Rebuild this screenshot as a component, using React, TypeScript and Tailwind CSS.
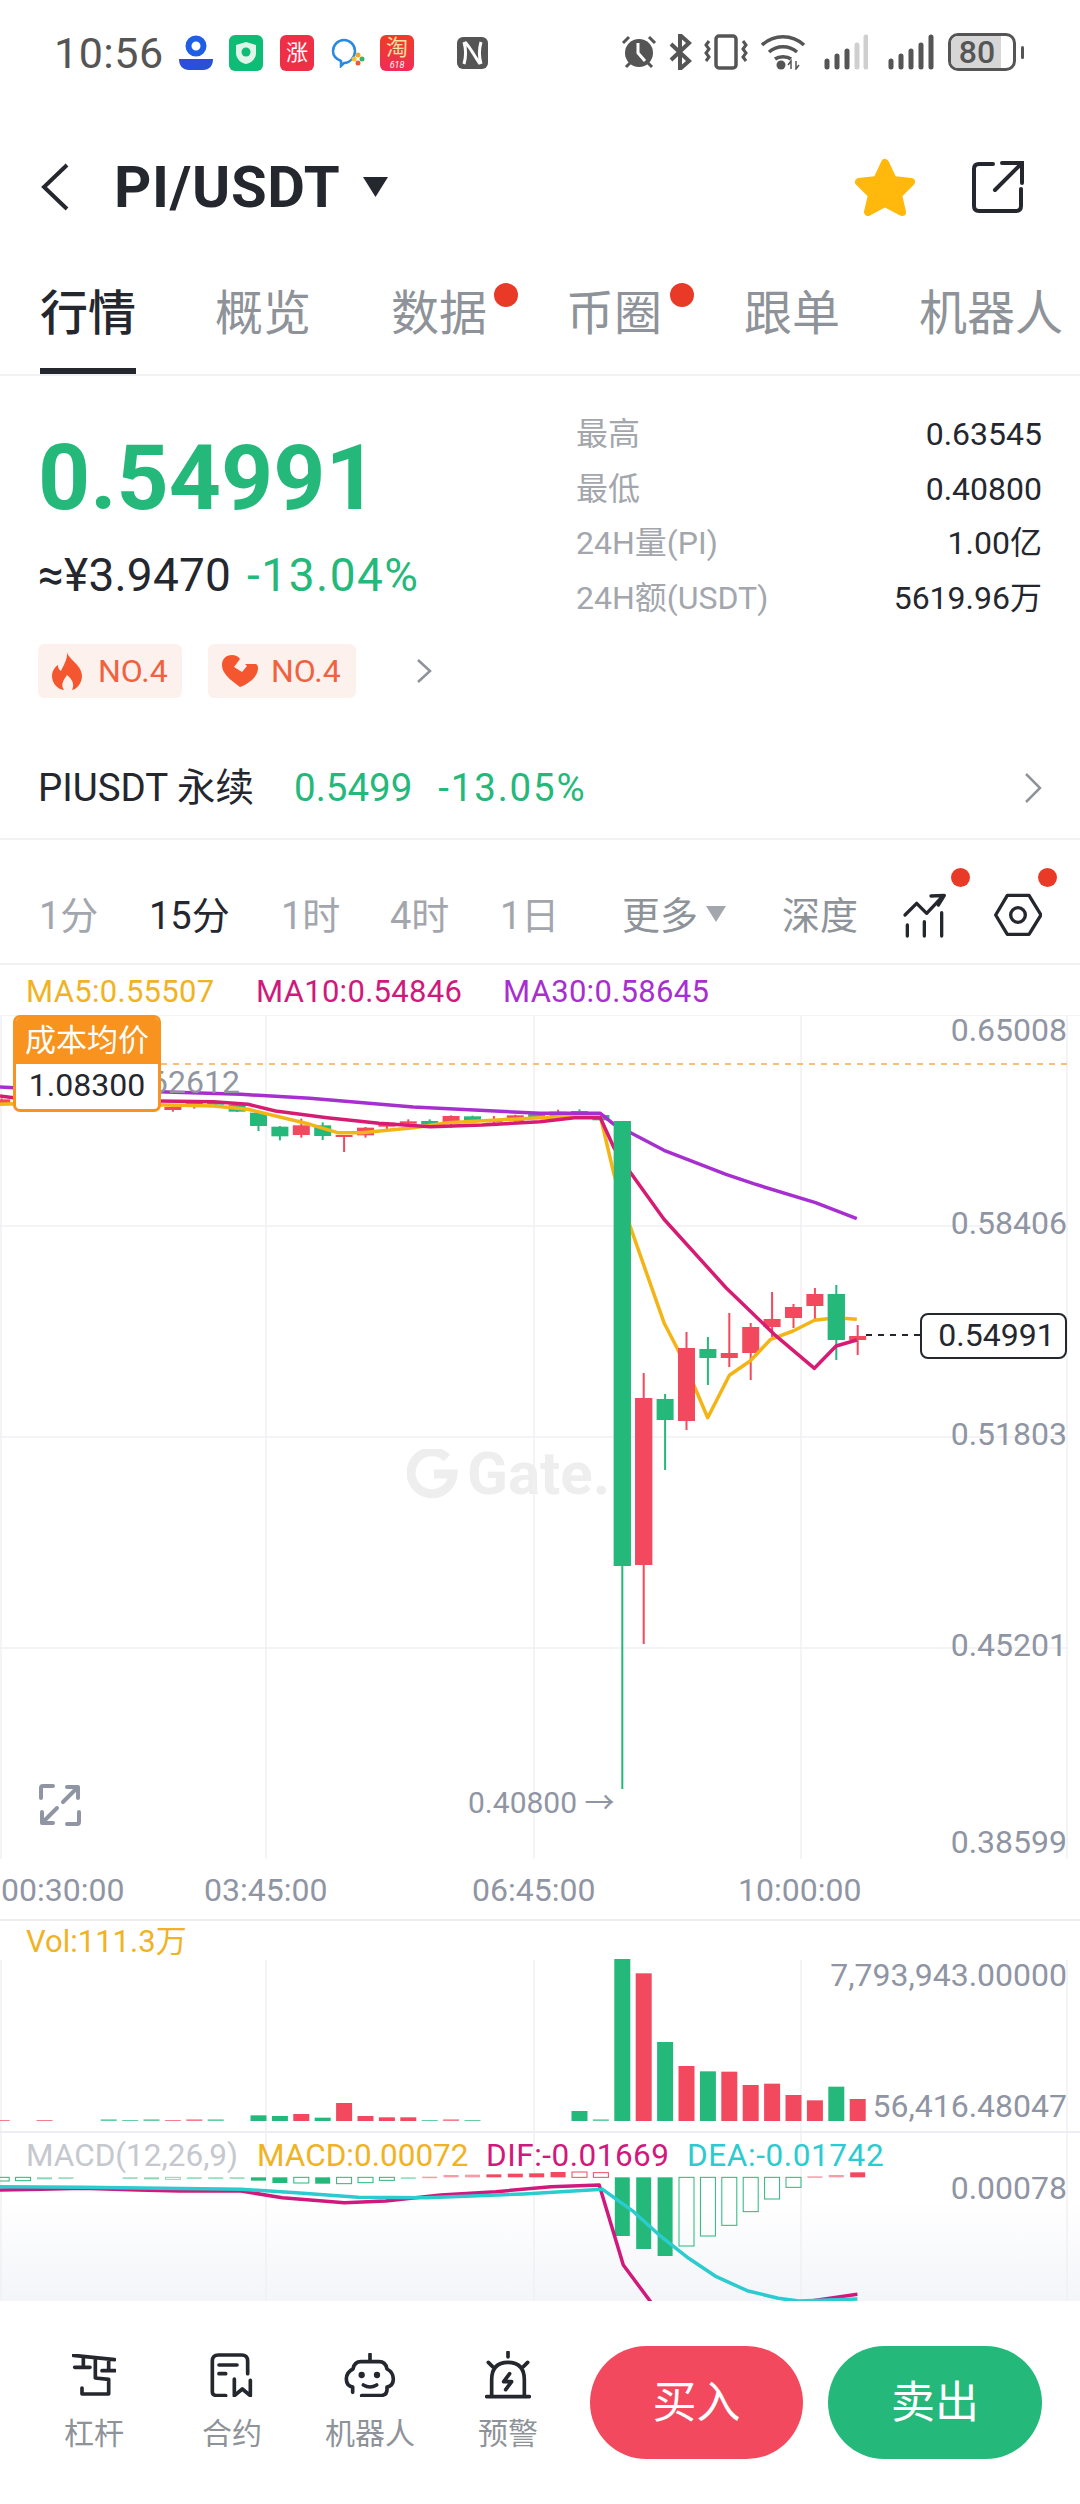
import React from "react";

const GREEN = "#24b97a";
const RED = "#f2495e";
const PITCH = 21.4;
const cx = (i: number) => 622.3 + PITCH * i;
const vy = (v: number) => 960 + v / 3;

// [index, isGreen, bodyTop, bodyBottom, wickTop, wickBottom] in page pixels
type C = [number, boolean, number, number, number, number];
const candles: C[] = [
  [-29, false, vy(415), vy(428), vy(412), vy(432)],
  [-21, false, vy(438), vy(447), vy(436), vy(452)],
  [-20, false, vy(420), vy(438), vy(418), vy(443)],
  [-19, true, vy(425), vy(431), vy(422), vy(433)],
  [-18, true, vy(431), vy(452), vy(429), vy(453)],
  [-17, true, vy(455), vy(495), vy(453), vy(510)],
  [-16, true, vy(497), vy(526), vy(495), vy(538)],
  [-15, false, vy(493), vy(522), vy(473), vy(530)],
  [-14, true, vy(493), vy(525), vy(484), vy(537)],
  [-13, false, vy(522), vy(525), vy(522), vy(573)],
  [-12, false, vy(500), vy(523), vy(498), vy(530)],
  [-11, false, vy(485), vy(497), vy(483), vy(512)],
  [-10, false, vy(481), vy(488), vy(475), vy(495)],
  [-9, true, vy(480), vy(490), vy(475), vy(495)],
  [-8, false, vy(465), vy(487), vy(463), vy(500)],
  [-7, true, vy(466), vy(482), vy(464), vy(484)],
  [-6, false, vy(478), vy(484), vy(465), vy(490)],
  [-5, false, vy(463), vy(480), vy(461), vy(482)],
  [-4, true, vy(458), vy(470), vy(456), vy(472)],
  [-3, false, vy(452), vy(467), vy(446), vy(469)],
  [-2, true, vy(450), vy(462), vy(445), vy(464)],
  [-1, true, vy(462), vy(478), vy(460), vy(480)],
  [0, true, 1120, 1565, 1120, 1788],
  [1, false, 1397, 1564, 1372, 1643],
  [2, true, 1398, 1419, 1393, 1469],
  [3, false, 1347, 1420, 1331, 1429],
  [4, true, 1348, 1357, 1336, 1384],
  [5, false, 1352, 1357, 1312, 1366],
  [6, false, 1326, 1352, 1322, 1379],
  [7, false, 1318, 1326, 1291, 1336],
  [8, false, 1306, 1317, 1303, 1327],
  [9, false, 1293, 1305, 1287, 1320],
  [10, true, 1293, 1339, 1284, 1359],
  [11, false, 1335, 1339, 1324, 1354],
];

const z3 = (pts: number[][]) => pts.map(([h, v]) => `${(h / 2.904).toFixed(1)},${vy(v).toFixed(1)}`).join(" ");
const z4 = (pts: number[][]) => pts.map(([h, v]) => `${(540 + h / 2.904).toFixed(1)},${vy(v).toFixed(1)}`).join(" ");

const ma30 = z3([[0, 378], [40, 380], [460, 392], [700, 400], [900, 412], [1200, 438], [1568, 457]]) + " " + z4([[175, 457], [215, 490], [263, 515], [360, 568], [540, 640], [620, 668], [800, 725], [920, 773]]);
const ma10 = z3([[0, 405], [40, 410], [460, 420], [620, 422], [720, 430], [800, 450], [950, 470], [1100, 487], [1250, 497], [1400, 492], [1568, 482]]) + " " + z4([[100, 470], [175, 470], [215, 560], [263, 635], [360, 775], [540, 980], [680, 1120], [797, 1222], [860, 1155], [920, 1137]]);
const ma5 = z3([[0, 430], [40, 428], [480, 432], [620, 435], [720, 445], [900, 490], [980, 515], [1050, 515], [1200, 500], [1300, 485], [1568, 470]]) + " " + z4([[100, 465], [175, 465], [215, 640], [263, 800], [360, 1085], [400, 1165], [450, 1280], [487, 1370], [550, 1243], [610, 1200], [670, 1135], [735, 1110], [797, 1078], [860, 1070], [920, 1075]]);

const y7 = (v: number) => 1900 + v / 3;
const vols: [number, boolean, number][] = [
  [-29, false, 660], [-27, false, 660], [-24, true, 658], [-23, true, 660], [-22, true, 658], [-21, false, 660], [-20, false, 658], [-19, true, 658],
  [-17, true, 646], [-16, true, 648], [-15, false, 642], [-14, true, 653], [-13, false, 609], [-12, false, 648], [-11, false, 652], [-10, false, 652],
  [-9, true, 660], [-8, false, 658], [-7, true, 660], [-2, true, 633], [-1, true, 658], [0, true, 177], [1, false, 220], [2, true, 426], [3, false, 498],
  [4, true, 514], [5, false, 515], [6, false, 555], [7, false, 551], [8, false, 585], [9, false, 601], [10, true, 560], [11, false, 597],
];

// [index, green, hollow, value in zoom rows]
const macd: [number, boolean, boolean, number][] = [
  [-29, true, true, 843], [-28, true, true, 842], [-27, true, false, 838], [-26, true, false, 835], [-23, true, false, 836], [-22, true, false, 838], [-21, true, true, 838],
  [-20, true, false, 835], [-19, true, false, 835], [-18, true, false, 836], [-17, true, false, 842], [-16, true, false, 849], [-15, true, true, 849], [-14, true, false, 851],
  [-13, true, true, 851], [-12, true, true, 848], [-11, true, true, 841], [-10, true, false, 836], [-9, false, false, 830], [-8, false, false, 825], [-7, false, false, 824],
  [-6, false, false, 823], [-5, false, false, 821], [-4, false, false, 820], [-3, false, false, 816], [-2, false, true, 816], [-1, false, true, 818],
  [0, true, false, 1008], [1, true, false, 1047], [2, true, false, 1068], [3, true, true, 1038], [4, true, true, 1008], [5, true, true, 976], [6, true, true, 935],
  [7, true, true, 897], [8, true, true, 862], [9, false, false, 829], [10, false, false, 825], [11, false, false, 817],
];

const z7 = (pts: number[][]) => pts.map(([h, v]) => `${(h / 1.452).toFixed(1)},${y7(v).toFixed(1)}`).join(" ");
const dif = z7([[0, 870], [60, 868], [120, 865], [200, 870], [260, 873], [350, 873], [410, 893], [500, 908], [560, 903], [640, 885], [720, 875], [800, 860], [870, 855], [905, 1095], [950, 1220]]);
const dif2 = z7([[1170, 1205], [1245, 1183]]);
const dea = z7([[0, 860], [120, 862], [350, 868], [430, 878], [520, 892], [620, 893], [760, 882], [875, 868], [920, 935], [960, 1010], [1000, 1075], [1040, 1130], [1085, 1172], [1130, 1195], [1160, 1203], [1245, 1197]]);

function GridV({ y1, y2 }: { y1: number; y2: number }) {
  return (
    <>
      {[1, 266, 534, 801, 1067].map((x) => (
        <line key={x} x1={x} x2={x} y1={y1} y2={y2} stroke="#f0f1f4" strokeWidth="1.5" />
      ))}
    </>
  );
}

function StatusBar() {
  return (
    <div className="flex h-[71px] items-end pl-[54px] text-[#555]">
      <span className="w-[124px] text-[43px] leading-[36px] tracking-[0.5px]">10:56</span>
      <div className="flex w-[442px] items-center">
        <svg width="36" height="36" viewBox="0 0 36 36" className="mr-[15px]">
          <circle cx="18" cy="11" r="7.5" fill="none" stroke="#1f5fe6" strokeWidth="6" />
          <path d="M1 24h34c0 7-4 11-10 11H11C5 35 1 31 1 24z" fill="#2a50d8" />
        </svg>
        <div className="mr-[17px] flex h-[36px] w-[34px] items-center justify-center rounded-[6px] bg-[#0dbd75]">
          <svg width="22" height="24" viewBox="0 0 22 24">
            <path d="M11 1l10 3v8c0 6-5 10-10 11C6 22 1 18 1 12V4z" fill="#dff5ea" />
            <circle cx="11" cy="11" r="4.5" fill="#0dbd75" />
          </svg>
        </div>
        <div className="mr-[17px] flex h-[36px] w-[34px] items-center justify-center rounded-[6px] bg-[#ee2f45] text-[22px] leading-none text-white">涨</div>
        <svg width="34" height="30" viewBox="0 0 34 30" className="mr-[15px]">
          <path d="M13 25l-3 3v-5C5 21 2 17 2 13 2 7 7 2 13 2s11 5 11 11-5 12-11 12z" fill="none" stroke="#2a8ae0" strokeWidth="2.5" />
          <circle cx="27" cy="17" r="2.5" fill="#f2a52b" /><circle cx="31" cy="21" r="2.5" fill="#35b56a" /><circle cx="27" cy="25" r="2.5" fill="#ee5a34" /><circle cx="23" cy="21" r="2.5" fill="#f3c32f" />
        </svg>
        <div className="mr-[43px] flex h-[36px] w-[34px] flex-col items-center justify-center rounded-[6px] bg-gradient-to-b from-[#ee3c1e] to-[#f02c56] text-[22px] leading-[24px] text-[#ffe0a0]">
          淘<span className="text-[9px] leading-[10px] text-white italic">618</span>
        </div>
        <svg width="31" height="32" viewBox="0 0 31 32">
          <rect x="0" y="0" width="31" height="32" rx="6" fill="#555" />
          <path d="M7 5c2 7 2 15 0 22M24 27c-2-7-2-15 0-22M8 5c5 5 10 15 15 22" fill="none" stroke="#fff" strokeWidth="3" />
        </svg>
      </div>
      <div className="flex items-center">
        <svg width="38" height="36" viewBox="0 0 38 36" className="mr-[10px]">
          <circle cx="19" cy="19" r="14" fill="#555" />
          <path d="M18 9v10l7 8" fill="none" stroke="#fff" strokeWidth="3" />
          <path d="M3 9l6-6M35 9l-6-6M6 33l4-4M32 33l-4-4" stroke="#555" strokeWidth="3" />
        </svg>
        <svg width="24" height="36" viewBox="0 0 24 36" className="mr-[12px]">
          <path d="M3 10l18 17-9 8V1l9 8L3 26" fill="none" stroke="#555" strokeWidth="4" />
        </svg>
        <svg width="44" height="36" viewBox="0 0 44 36" className="mr-[12px]">
          <rect x="12" y="2" width="20" height="32" rx="3" fill="none" stroke="#555" strokeWidth="3.5" />
          <path d="M5 7l-3 4 3 4-3 4 3 4-3 4M39 7l3 4-3 4 3 4-3 4 3 4" fill="none" stroke="#555" strokeWidth="3" />
        </svg>
        <svg width="46" height="36" viewBox="0 0 46 36" className="mr-[18px]">
          <path d="M2 11c12-11 30-11 42 0M9 18c8-7 20-7 28 0M15 25c4-3 12-3 16 0" fill="none" stroke="#555" strokeWidth="3.5" />
          <circle cx="21" cy="31" r="4.5" fill="#555" />
          <path d="M31 35v-8l-3 4M36 27v8l3-4" fill="none" stroke="#555" strokeWidth="1.5" />
        </svg>
        <svg width="44" height="36" viewBox="0 0 44 36" className="mr-[20px]">
          <g stroke="#555" strokeWidth="5" strokeLinecap="round">
            <path d="M3 27v6M13 22v11M23 17v16" />
            <path d="M33 11v22M42 3v30" stroke="#cfcfcf" />
          </g>
        </svg>
        <svg width="46" height="36" viewBox="0 0 46 36" className="mr-[14px]">
          <g stroke="#555" strokeWidth="5" strokeLinecap="round">
            <path d="M3 27v6M13 22v11M23 17v16M33 11v22M43 3v30" />
          </g>
        </svg>
        <div className="relative flex h-[38px] w-[68px] items-center overflow-hidden rounded-[10px] border-[3px] border-[#555]">
          <div className="absolute inset-y-0 left-0 w-[50px] bg-[#d6d6d6]" />
          <span className="relative w-[52px] text-center text-[32px] leading-none font-medium">80</span>
        </div>
        <div className="ml-[5px] h-[13px] w-[3px] rounded-full bg-[#555]" />
      </div>
    </div>
  );
}

function Header() {
  return (
    <div className="mt-[78px] flex h-[76px] items-center pl-[41px] text-[#24272e]">
      <svg width="28" height="48" viewBox="0 0 28 48" className="mr-[45px]">
        <path d="M26 2L3 24l23 22" fill="none" stroke="#24272e" strokeWidth="4" />
      </svg>
      <span className="text-[58px] leading-none font-bold tracking-[0.7px]">PI/USDT</span>
      <svg width="27" height="22" viewBox="0 0 27 22" className="ml-[22px]">
        <path d="M1 1h25L13.500 21z" fill="#24272e" />
      </svg>
      <svg width="62" height="58" viewBox="0 0 62 58" className="ml-[465px]">
        <path d="M31 5l8 17 18 2-13 13 4 17-17-9-17 9 4-17L5 24l18-2z" fill="#ffb80b" stroke="#ffb80b" strokeWidth="8" strokeLinejoin="round" />
      </svg>
      <svg width="54" height="54" viewBox="0 0 54 54" className="ml-[55px]">
        <path d="M22 4H8Q3 4 3 9v37q0 5 5 5h37q5 0 5-5V29" fill="none" stroke="#24272e" strokeWidth="4" strokeLinecap="round" />
        <path d="M24 30L50 4M31 3h20v20" fill="none" stroke="#24272e" strokeWidth="4" strokeLinecap="round" />
      </svg>
    </div>
  );
}

function Tabs() {
  const items = [
    { t: "行情", w: "w-[175px]", active: true },
    { t: "概览", w: "w-[176px]" },
    { t: "数据", w: "w-[175px]", dot: "left-[103px]" },
    { t: "币圈", w: "w-[178px]", dot: "left-[104px]" },
    { t: "跟单", w: "w-[175px]" },
    { t: "机器人", w: "w-[146px]" },
  ];
  return (
    <div className="mt-[47px] flex h-[104px] overflow-hidden border-b-[2px] border-[#f0f1f3] pl-[40px]">
      {items.map((it) => (
        <div key={it.t} className={`relative shrink-0 ${it.w}`}>
          <span className={`block text-[48px] leading-[83px] whitespace-nowrap ${it.active ? "font-medium text-[#24272e]" : "text-[#8e9399]"}`}>{it.t}</span>
          {it.active && <div className="absolute bottom-0 left-0 h-[6px] w-[96px] bg-[#24272e]" />}
          {it.dot && <div className={`absolute top-[11px] h-[24px] w-[24px] rounded-full bg-[#e83a26] ${it.dot}`} />}
        </div>
      ))}
    </div>
  );
}

function Quote() {
  const stats = [
    ["最高", "0.63545"],
    ["最低", "0.40800"],
    ["24H量(PI)", "1.00亿"],
    ["24H额(USDT)", "5619.96万"],
  ];
  return (
    <div className="flex h-[362px] pt-[31px] pl-[38px]">
      <div className="w-[538px]">
        <div className="pt-[26px] text-[91px] leading-[90px] font-bold text-[#24b97a]">0.54991</div>
        <div className="mt-[26px] flex text-[46px] leading-[52px]">
          <span className="tracking-[0.2px] text-[#24272e]">≈¥3.9470</span>
          <span className="ml-[16px] tracking-[1.5px] text-[#24b97a]">-13.04%</span>
        </div>
        <div className="mt-[43px] flex items-center text-[32px] text-[#f0623e]">
          <div className="flex h-[54px] w-[144px] items-center rounded-[6px] bg-[#fdf1ed] pl-[12px]">
            <svg width="34" height="38" viewBox="0 0 34 38"><path d="M17 0c2 8 15 13 15 24 0 7-5 13-10 14 3-6 0-11-5-15-3 5-7 9-3 15C7 37 2 31 2 24c0-5 3-9 6-11 0 3 1 5 3 6 2-5 7-12 6-19z" fill="#f4572f" /></svg>
            <span className="ml-[14px]">NO.4</span>
          </div>
          <div className="ml-[26px] flex h-[54px] w-[148px] items-center rounded-[6px] bg-[#fdf1ed] pl-[13px]">
            <svg width="38" height="34" viewBox="0 0 38 34"><path d="M19 33C8 25 1 19 1 11 1 5 5 1 11 1c3 0 6 1 8 4l-6 8 8 5 5-6-2-2h11c2 1 2 3 2 5-1 8-8 14-18 18z" fill="#f4572f" /></svg>
            <span className="ml-[12px]">NO.4</span>
          </div>
          <svg width="16" height="26" viewBox="0 0 16 26" className="ml-[60px]"><path d="M2 2l12 11L2 24" fill="none" stroke="#8e9399" strokeWidth="2.500" /></svg>
        </div>
      </div>
      <div className="flex w-[466px] flex-col text-[32px] leading-[54.500px]">
        {stats.map(([a, b]) => (
          <div key={a} className="flex justify-between">
            <span className="text-[#a3a7ad]">{a}</span>
            <span className="text-[#24272e]">{b}</span>
          </div>
        ))}
      </div>
    </div>
  );
}

function PerpRow() {
  return (
    <div className="flex h-[102px] items-center border-b-[2px] border-[#f0f1f3] pr-[38px] pl-[38px] text-[38.500px]">
      <span className="w-[256px] text-[#24272e]">PIUSDT 永续</span>
      <span className="text-[#24b97a]">0.5499</span>
      <span className="ml-[26px] tracking-[1.8px] text-[#24b97a]">-13.05%</span>
      <svg width="18" height="32" viewBox="0 0 18 32" className="ml-auto"><path d="M2 2l14 14L2 30" fill="none" stroke="#8e9399" strokeWidth="2.500" /></svg>
    </div>
  );
}

function Timeframes() {
  const items = [
    ["1分", "w-[110px]", "text-[#a3a7ad]"],
    ["15分", "w-[132px]", "text-[#24272e]"],
    ["1时", "w-[109px]", "text-[#a3a7ad]"],
    ["4时", "w-[110px]", "text-[#a3a7ad]"],
    ["1日", "w-[122px]", "text-[#a3a7ad]"],
  ];
  return (
    <div className="relative flex h-[125px] items-center border-b-[2px] border-[#f0f1f3] pt-[34px] pb-[5px] pl-[39px] text-[38px]">
      {items.map(([t, w, c]) => (
        <span key={t} className={`${w} ${c}`}>{t}</span>
      ))}
      <span className="text-[#8e9399]">更多</span>
      <svg width="20" height="16" viewBox="0 0 20 16" className="mt-[-4px] ml-[8px]"><path d="M0 0h20L10 16z" fill="#a3a7ad" /></svg>
      <span className="ml-[56px] text-[#8e9399]">深度</span>
      <svg width="48" height="46" viewBox="0 0 144 138" className="mt-[-2px] ml-[44px]">
        <path d="M9 75l35-35 30 30 45-48M87 18l40-2-18 29M16 105v33M67 95v43M119 68v70" transform="translate(0 -6)" fill="none" stroke="#24272e" strokeWidth="10" strokeLinecap="round" strokeLinejoin="round" />
      </svg>
      <svg width="48" height="44" viewBox="0 0 144 132" className="mt-[-2px] ml-[44px]">
        <path d="M5 66L40 7h65l36 59-36 58H40z" fill="none" stroke="#24272e" strokeWidth="10" strokeLinejoin="round" />
        <circle cx="72" cy="66" r="22" fill="none" stroke="#24272e" strokeWidth="10" />
      </svg>
      <div className="absolute top-[28px] left-[951px] h-[19px] w-[19px] rounded-full bg-[#e83a26]" />
      <div className="absolute top-[28px] left-[1038px] h-[19px] w-[19px] rounded-full bg-[#e83a26]" />
    </div>
  );
}

function PriceChart() {
  const labels: [string, string][] = [
    ["0.65008", "top-[-5px]"],
    ["0.58406", "top-[188px]"],
    ["0.51803", "top-[399px]"],
    ["0.45201", "top-[610px]"],
    ["0.38599", "top-[807px]"],
  ];
  return (
    <div className="relative h-[843px] border-t-[1px] border-[#f3f4f6]">
      <div className="absolute top-[428px] left-[407px] flex items-center text-[#eeeeee]">
        <svg width="54" height="50" viewBox="0 0 54 50"><path d="M40 9A21 21 0 1 0 46 25H27" fill="none" stroke="#eeeeee" strokeWidth="9" /></svg>
        <span className="ml-[6px] text-[60px] leading-none font-bold">Gate.</span>
      </div>
      <svg width="1080" height="843" viewBox="0 1015 1080 843" className="absolute inset-0">
        <GridV y1={1015} y2={1858} />
        {[1225, 1436, 1647].map((y) => (
          <line key={y} x1="0" x2="1067" y1={y} y2={y} stroke="#f0f1f4" strokeWidth="1.5" />
        ))}
        <line x1="161" x2="1067" y1="1063" y2="1063" stroke="#f7a94b" strokeWidth="1.5" strokeDasharray="6 6" />
        {candles.map(([i, g, t, b, wt, wb]) => (
          <g key={i} fill={g ? GREEN : RED}>
            <rect x={cx(i) - 1} y={wt} width="2" height={wb - wt} />
            <rect x={cx(i) - 8.500} y={t} width="17" height={Math.max(b - t, 2)} />
          </g>
        ))}
        <polyline points={ma5} fill="none" stroke="#f3b415" strokeWidth="3.5" strokeLinejoin="round" />
        <polyline points={ma10} fill="none" stroke="#d81b72" strokeWidth="3.5" strokeLinejoin="round" />
        <polyline points={ma30} fill="none" stroke="#a72fd0" strokeWidth="3.5" strokeLinejoin="round" />
        <rect x={cx(0) - 8.500} y="1120" width="17" height="445" fill={GREEN} />
        <rect x={cx(1) - 8.500} y="1397" width="17" height="167" fill={RED} />
        <rect x={cx(3) - 8.500} y="1347" width="17" height="73" fill={RED} />
        <rect x={cx(10) - 8.500} y="1293" width="17" height="46" fill={GREEN} />
        <line x1="866" x2="920" y1="1334" y2="1334" stroke="#24272e" strokeWidth="2" strokeDasharray="6 6" />
      </svg>
      <div className="absolute top-[47px] left-[150px] text-[32px] leading-[38px] text-[#9095a0]">62612</div>
      <div className="absolute top-[-1px] left-[13px] w-[148px] overflow-hidden rounded-[7px] border-[3px] border-[#f7931e] bg-white text-center">
        <div className="h-[46px] bg-[#f7931e] text-[31px] leading-[46px] text-white">成本均价</div>
        <div className="h-[45px] text-[32px] leading-[43px] text-[#24272e]">1.08300</div>
      </div>
      {labels.map(([t, c]) => (
        <div key={t} className={`absolute right-[13px] text-[32px] leading-[38px] text-[#8f95a3] ${c}`}>{t}</div>
      ))}
      <div className="absolute top-[297px] left-[920px] flex h-[46px] w-[147px] items-center justify-center rounded-[8px] border-[2px] border-[#24272e] bg-white pb-[2px] pl-[6px] text-[32px] text-[#24272e]">0.54991</div>
      <div className="absolute top-[768px] left-[468px] text-[30px] leading-[38px] whitespace-nowrap text-[#8f95a3]">0.40800 →</div>
      <svg width="42" height="42" viewBox="0 0 42 42" className="absolute top-[768px] left-[39px]">
        <path d="M2 14V4q0-2 2-2h10M40 28v10q0 2-2 2H28M24 18L38 4M28 3h11v11M4 38l14-14M3 28v11h11" fill="none" stroke="#8f95a3" strokeWidth="4" strokeLinecap="round" strokeLinejoin="round" />
      </svg>
    </div>
  );
}

function TimeAxis() {
  return (
    <div className="relative h-[63px] border-b-[2px] border-[#eceef1] text-[32px] text-[#8f95a3]">
      <span className="absolute top-[8px] left-[1px]">00:30:00</span>
      <span className="absolute top-[8px] left-[204px]">03:45:00</span>
      <span className="absolute top-[8px] left-[472px]">06:45:00</span>
      <span className="absolute top-[8px] left-[738px]">10:00:00</span>
    </div>
  );
}

function VolPanel() {
  return (
    <div className="relative h-[212px] border-b-[2px] border-[#eceef1]">
      <svg width="1080" height="210" viewBox="0 1921 1080 210" className="absolute inset-0">
        <GridV y1={1960} y2={2131} />
        {vols.map(([i, g, v]) => (
          <rect key={i} x={cx(i) - 8} y={y7(v)} width="16" height={2121 - y7(v)} fill={g ? GREEN : RED} opacity={v >= 658 ? 0.7 : 1} />
        ))}
      </svg>
      <div className="absolute top-[2px] left-[26px] text-[31px] leading-[38px] text-[#f0b323]">Vol:111.3万</div>
      <div className="absolute top-[35px] right-[13px] text-[32px] leading-[38px] text-[#8f95a3]">7,793,943.00000</div>
      <div className="absolute top-[166px] right-[13px] text-[32px] leading-[38px] text-[#8f95a3]">56,416.48047</div>
    </div>
  );
}

function MacdPanel() {
  return (
    <div className="relative h-[168px] overflow-hidden bg-gradient-to-b from-white from-[40%] to-[#f4f5f9]">
      <svg width="1080" height="168" viewBox="0 2133 1080 168" className="absolute inset-0">
        <GridV y1={2133} y2={2301} />
        {macd.map(([i, g, hollow, v]) => {
          const base = y7(832);
          const y = Math.min(base, y7(v));
          const h = Math.max(Math.abs(y7(v) - base), 1.500);
          const c = g ? GREEN : RED;
          const small = h < 3;
          return (
            <rect key={i} x={cx(i) - 7.500} y={y} width="15" height={h} fill={hollow ? "none" : c} stroke={hollow ? c : "none"} strokeWidth="1" opacity={small ? 0.55 : 1} />
          );
        })}
        <polyline points={dif} fill="none" stroke="#d1187c" strokeWidth="3.5" strokeLinejoin="round" />
        <polyline points={dif2} fill="none" stroke="#d1187c" strokeWidth="3.5" />
        <polyline points={dea} fill="none" stroke="#2bcbd0" strokeWidth="3.5" strokeLinejoin="round" />
      </svg>
      <div className="absolute top-[4px] left-[26px] flex text-[31.500px] leading-[38px] whitespace-nowrap">
        <span className="w-[231px] text-[#c5c8ce]">MACD(12,26,9)</span>
        <span className="w-[229px] text-[#f0b323]">MACD:0.00072</span>
        <span className="w-[201px] tracking-[0.5px] text-[#d1187c]">DIF:-0.01669</span>
        <span className="tracking-[0.6px] text-[#2bcbd0]">DEA:-0.01742</span>
      </div>
      <div className="absolute top-[36px] right-[13px] text-[32px] leading-[38px] text-[#8f95a3]">0.00078</div>
    </div>
  );
}

function Tool({ label, children }: { label: string; children: React.ReactNode }) {
  return (
    <div className="flex w-[138px] flex-col items-center">
      <div className="flex h-[44px] items-center justify-center">{children}</div>
      <span className="mt-[18px] text-[30px] leading-[38px] text-[#8e9399]">{label}</span>
    </div>
  );
}

function Footer() {
  return (
    <div className="flex flex-1 items-start bg-white pt-[45px] pl-[25px]">
      <div className="flex w-[565px] pt-[7px]">
        <Tool label="杠杆">
          <svg width="44" height="42" viewBox="0 0 132 126" fill="none" stroke="#24272e" strokeWidth="11" strokeLinecap="round" strokeLinejoin="round">
            <path d="M4 4l124 13M34 8v32M8 40h46M110 17v33M90 50h40M70 12v60l40 4v44H30v-18" />
          </svg>
        </Tool>
        <Tool label="合约">
          <svg width="44" height="44" viewBox="0 0 126 132" fill="none" stroke="#24272e" strokeWidth="11" strokeLinecap="round" strokeLinejoin="round">
            <path d="M110 62V24Q110 6 92 6H22Q4 6 4 24v92q0 12 18 12h22M24 36h54M24 62h20M70 78v50l24-20 24 20V82" />
          </svg>
        </Tool>
        <Tool label="机器人">
          <svg width="52" height="44" viewBox="0 0 150 132" fill="none" stroke="#24272e" strokeWidth="11" strokeLinecap="round" strokeLinejoin="round">
            <path d="M75 4v22M48 26h54q20 0 24 22 19 10 19 30t-19 24v8q0 18-24 18H50M48 26q-20 0-24 22Q4 58 4 78t19 24v16" />
            <circle cx="50" cy="66" r="4" fill="#24272e" /><circle cx="96" cy="66" r="4" fill="#24272e" />
            <path d="M55 96q20 12 40 0" />
          </svg>
        </Tool>
        <Tool label="预警">
          <svg width="46" height="48" viewBox="0 0 138 144" fill="none" stroke="#24272e" strokeWidth="11" strokeLinecap="round" strokeLinejoin="round">
            <path d="M69 4v14M10 34l12 12M128 34l-12 12M20 136V86q0-52 49-52t49 52v50M5 137h128M74 68L56 92h24L62 116" />
          </svg>
        </Tool>
      </div>
      <div className="flex h-[113px] w-[213px] items-center justify-center rounded-full bg-[#f2495e] text-[44px] text-white">买入</div>
      <div className="ml-[25px] flex h-[113px] w-[214px] items-center justify-center rounded-full bg-[#24b97a] text-[44px] text-white">卖出</div>
    </div>
  );
}

export default function App() {
  return (
    <div className="flex h-[2504px] w-[1080px] flex-col overflow-hidden bg-white font-['Roboto','Noto_Sans_CJK_SC',sans-serif]">
      <StatusBar />
      <Header />
      <Tabs />
      <Quote />
      <PerpRow />
      <Timeframes />
      <div className="flex h-[50px] items-center pt-[4px] pl-[26px] text-[31px] tracking-[0.3px] whitespace-nowrap">
        <span className="w-[230px] text-[#f0b323]">MA5:0.55507</span>
        <span className="w-[247px] text-[#d1187c]">MA10:0.54846</span>
        <span className="text-[#a72fd0]">MA30:0.58645</span>
      </div>
      <PriceChart />
      <TimeAxis />
      <VolPanel />
      <MacdPanel />
      <Footer />
    </div>
  );
}
